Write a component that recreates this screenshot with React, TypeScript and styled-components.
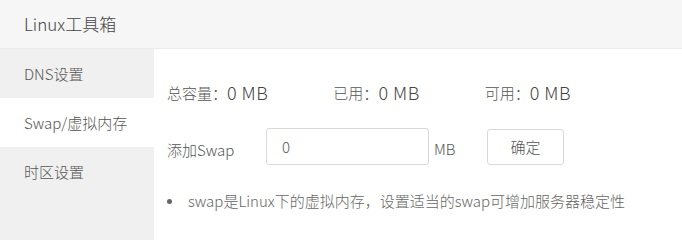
import React from "react";
import styled, { createGlobalStyle } from "styled-components";

const Global = createGlobalStyle`
  html, body { margin: 0; padding: 0; background: #fff; }
  body {
    font-family: "Noto Sans CJK SC", "Noto Sans", sans-serif;
    font-weight: 300;
    color: #555;
    overflow: hidden;
  }
  * { box-sizing: border-box; }
`;

const Page = styled.div`
  width: 100%;
  height: 100vh;
  min-height: 205px;
  overflow: hidden;
  display: grid;
  grid-template-rows: 49px 1fr;
`;

const Header = styled.div`
  background: #f6f6f6;
  border-bottom: 1px solid #ebebeb;
  padding-left: 24px;
  font-size: 17px;
  line-height: 47px;
  color: #444;
`;

const Body = styled.div`
  display: grid;
  grid-template-columns: 154px 1fr;
  min-height: 0;
`;

const Sidebar = styled.nav`
  background: #f0f0f0;
  display: flex;
  flex-direction: column;
`;

const NavItem = styled.div<{ $active?: boolean }>`
  height: 49px;
  flex: none;
  line-height: 49px;
  padding-left: 24px;
  font-size: 15px;
  color: #555;
  background: ${(p) => (p.$active ? "#fff" : "transparent")};
`;

const Content = styled.div`
  padding: 28px 0 0 13px;
  display: flex;
  flex-direction: column;
  min-width: 0;
`;

const StatsRow = styled.div`
  height: 30px;
  flex: none;
  display: flex;
  align-items: center;
  gap: 65px;
`;

const Stat = styled.div`
  display: flex;
  align-items: center;
  white-space: nowrap;
`;

const StatLabel = styled.span`
  font-size: 15px;
  color: #555;
`;

const StatValue = styled.span`
  font-size: 18px;
  letter-spacing: 0.5px;
  color: #444;
`;

const FormRow = styled.div`
  margin-top: 21px;
  height: 37px;
  flex: none;
  display: flex;
  align-items: center;
`;

const FormLabel = styled.span`
  width: 99px;
  margin-top: 5px;
  font-size: 15px;
  color: #555;
`;

const Input = styled.input`
  width: 163px;
  height: 37px;
  border: 1px solid #d9d9d9;
  border-radius: 3px;
  padding: 0 15px;
  font-family: inherit;
  font-weight: 300;
  font-size: 15px;
  color: #555;
  outline: none;
`;

const Unit = styled.span`
  margin: 4px 0 0 5px;
  font-size: 15px;
  color: #555;
  width: 53px;
`;

const Button = styled.button`
  width: 77px;
  height: 36px;
  border: 1px solid #d9d9d9;
  border-radius: 3px;
  background: #fff;
  font-family: inherit;
  font-weight: 300;
  font-size: 15px;
  color: #555;
  padding: 0;
`;

const Tips = styled.ul`
  margin: 24px 0 0;
  padding: 0;
  list-style: none;
  flex: none;
`;

const Tip = styled.li`
  display: flex;
  align-items: center;
  font-size: 15px;
  line-height: 24px;
  color: #666;
  white-space: nowrap;
`;

const Dot = styled.span`
  width: 5px;
  height: 5px;
  border-radius: 50%;
  background: #666;
  margin-right: 16px;
  flex: none;
`;

export default function App() {
  return (
    <>
      <Global />
      <Page>
        <Header>Linux工具箱</Header>
        <Body>
          <Sidebar>
            <NavItem>DNS设置</NavItem>
            <NavItem $active>Swap/虚拟内存</NavItem>
            <NavItem>时区设置</NavItem>
          </Sidebar>
          <Content>
            <StatsRow>
              <Stat>
                <StatLabel>总容量：</StatLabel>
                <StatValue>0 MB</StatValue>
              </Stat>
              <Stat>
                <StatLabel>已用：</StatLabel>
                <StatValue>0 MB</StatValue>
              </Stat>
              <Stat>
                <StatLabel>可用：</StatLabel>
                <StatValue>0 MB</StatValue>
              </Stat>
            </StatsRow>
            <FormRow>
              <FormLabel>添加Swap</FormLabel>
              <Input defaultValue="0" />
              <Unit>MB</Unit>
              <Button>确定</Button>
            </FormRow>
            <Tips>
              <Tip>
                <Dot />
                swap是Linux下的虚拟内存，设置适当的swap可增加服务器稳定性
              </Tip>
            </Tips>
          </Content>
        </Body>
      </Page>
    </>
  );
}
